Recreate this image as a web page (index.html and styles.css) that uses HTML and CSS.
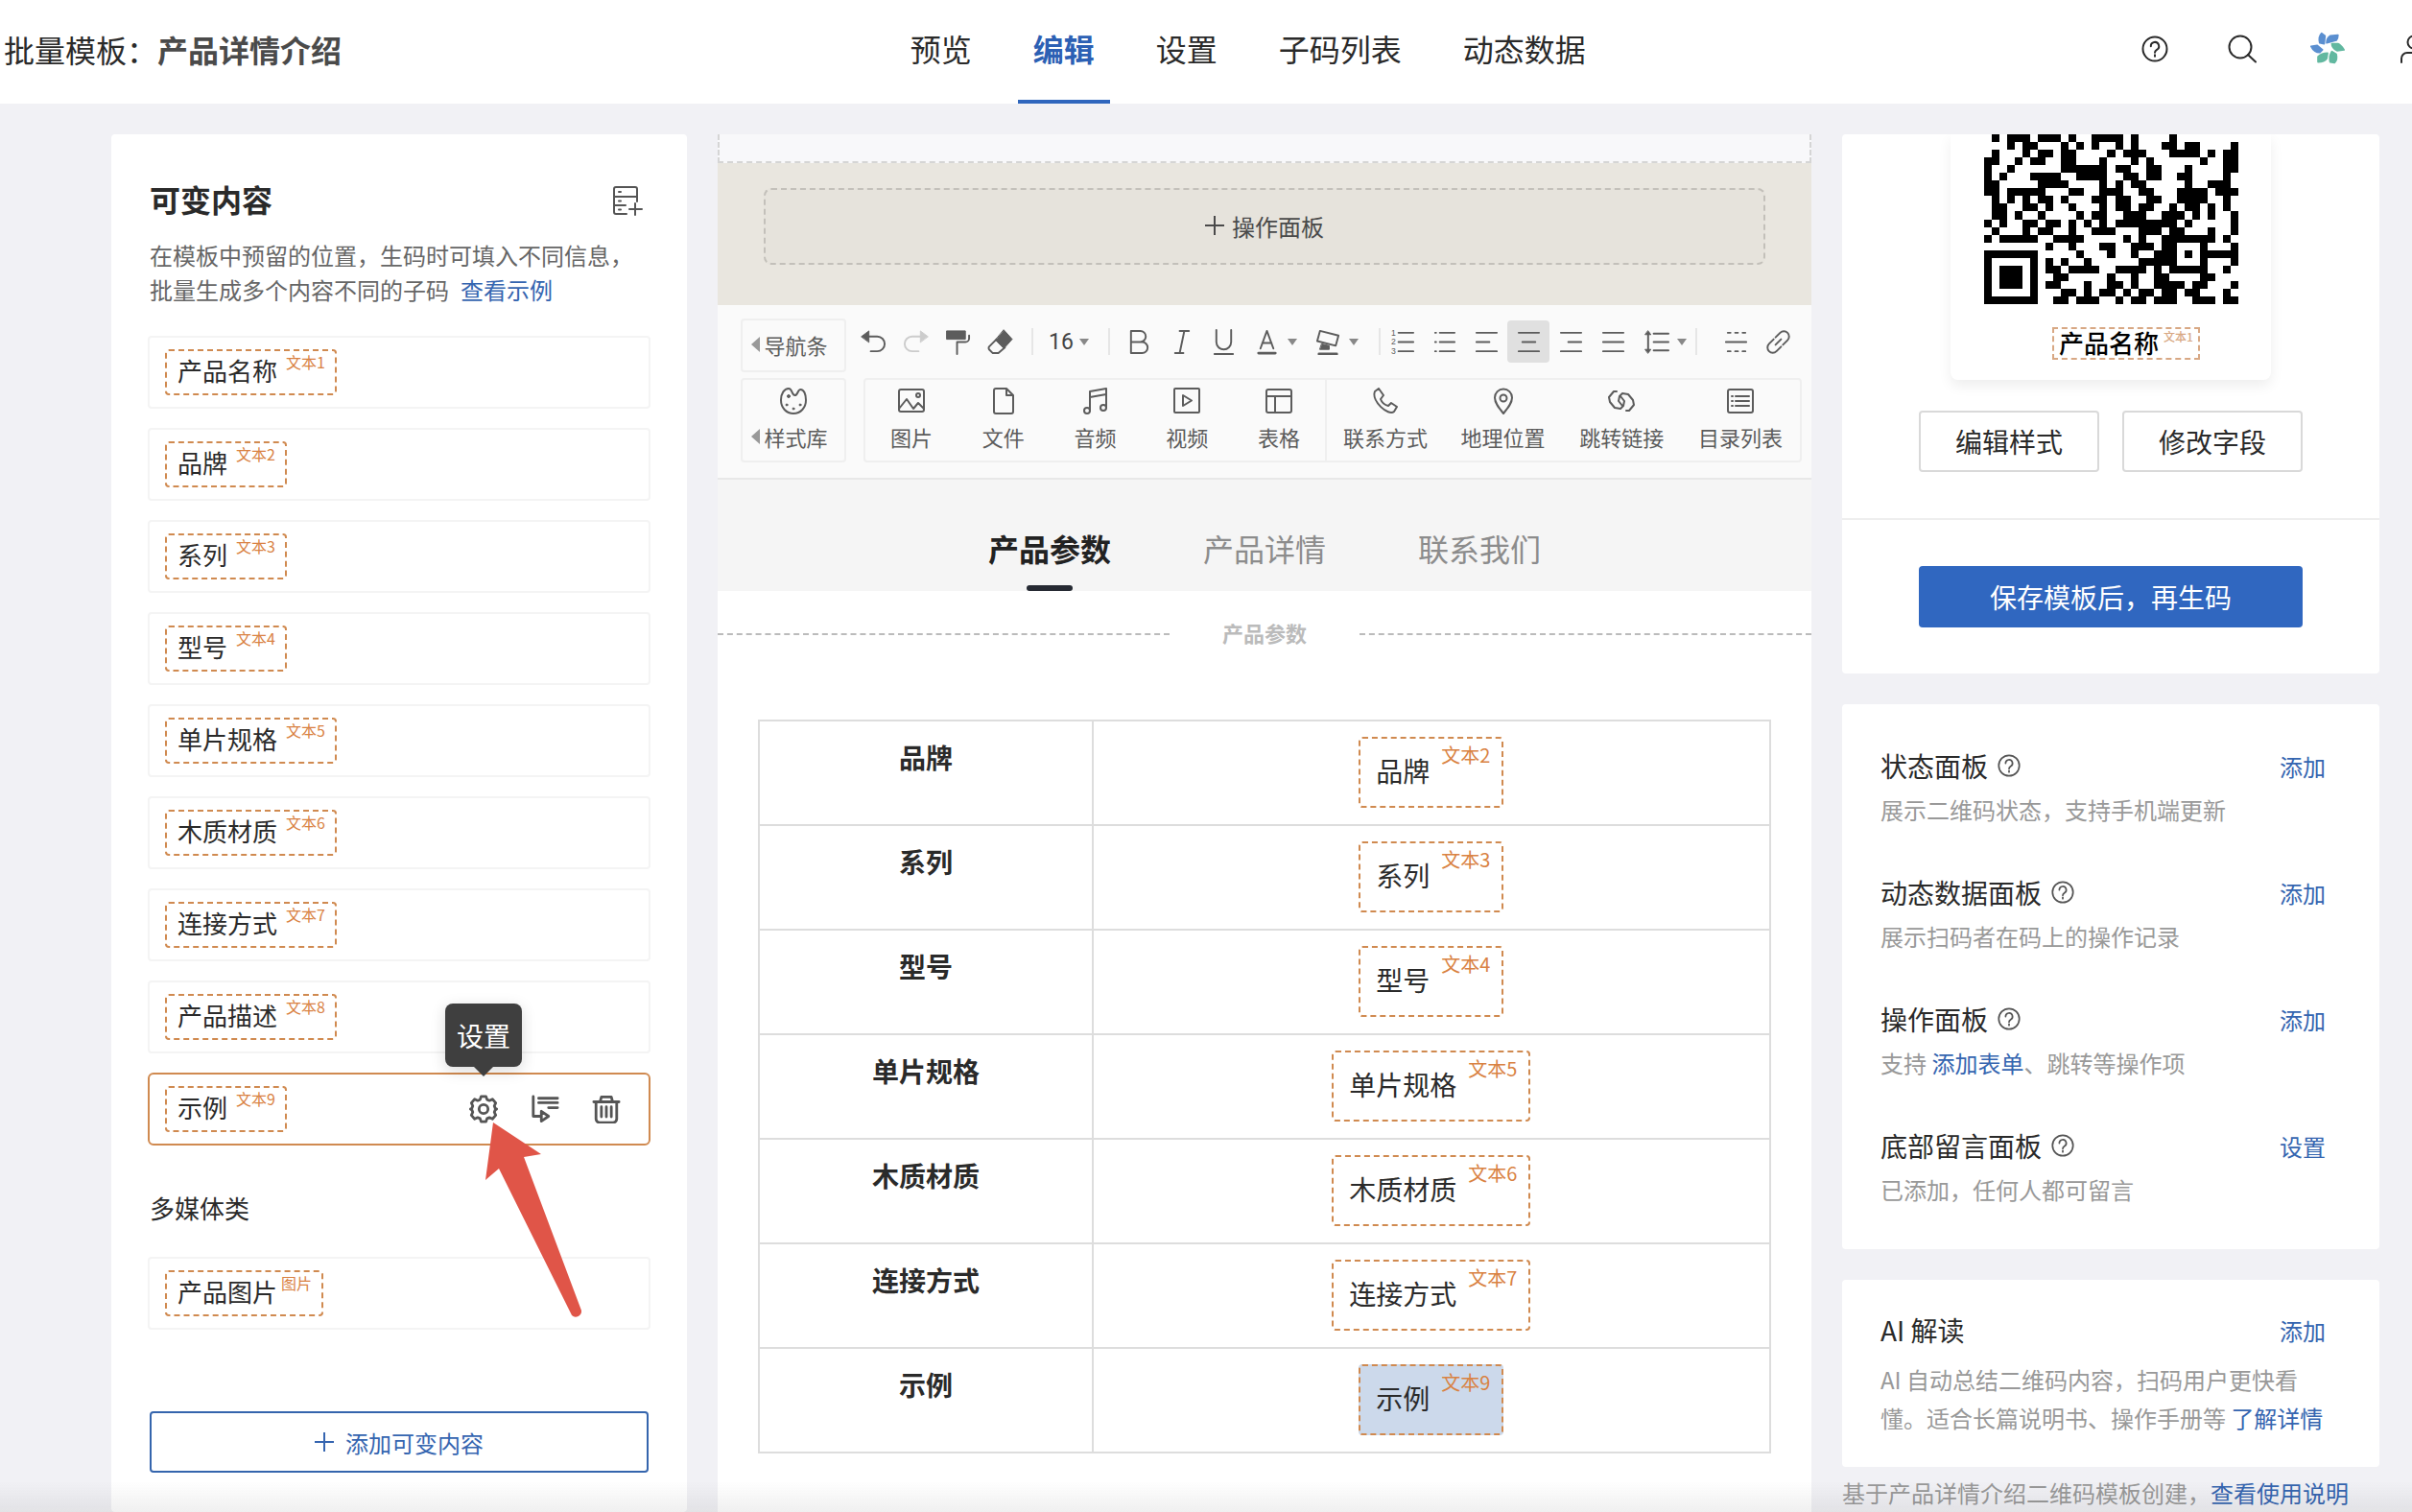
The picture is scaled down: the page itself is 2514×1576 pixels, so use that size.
FILE: index.html
```html
<!DOCTYPE html>
<html lang="zh-CN">

<head>
  <meta charset="UTF-8">
  <meta name="viewport" content="width=device-width, initial-scale=1.0">

  <title>批量模板：产品详情介绍</title>
  <link rel="stylesheet" href="styles.css">
</head>

<body>
  <!-- Shared icons -->
  <svg class="sprite" aria-hidden="true">
    <symbol id="icon-help" viewBox="0 0 28 28">
      <circle cx="14" cy="14" r="12.5" />
      <path d="M9.8 11.2a4.2 4.2 0 1 1 6.2 3.6c-1.4.9-2 1.500-2 3" />
      <path d="M14 20.200v1.600" />
    </symbol>
    <symbol id="icon-caret" viewBox="0 0 10 7">
      <path d="M0 0h10L5 7z" />
    </symbol>
    <symbol id="icon-plus" viewBox="0 0 20 20">
      <path d="M10 0v20M0 10h20" />
    </symbol>
    <symbol id="icon-left" viewBox="0 0 9 16">
      <path d="M9 0v16L0 8z" />
    </symbol>
  </svg>

  <header class="header">
    <h1 class="title">批量模板<span class="colon">：</span><b>产品详情介绍</b></h1>
    <nav class="nav">
      <a href="#">预览</a>
      <a href="#" class="active">编辑</a>
      <a href="#">设置</a>
      <a href="#">子码列表</a>
      <a href="#">动态数据</a>
    </nav>
    <div class="header-tools">
      <button type="button" aria-label="帮助"><svg class="line" viewBox="-2 -2 32 32"><use href="#icon-help" width="28" height="28" /></svg></button>
      <button type="button" aria-label="搜索">
        <svg class="line" viewBox="0 0 32 32"><circle cx="15" cy="14" r="11.500" /><path d="M23 22l8 7.500" /></svg>
      </button>
      <button type="button" aria-label="应用">
        <svg class="logo" viewBox="0 0 40 40">
          <g fill="#5b8fd0" stroke="#5b8fd0">
            <path d="M13 2l4 3-1 9-5-1c-1-4-1-8 2-11z" />
            <path d="M23 5l9-1c0 3-1 5-2 6l-11 3c0-3 1-6 4-8z" />
            <path d="M1 17l7-1 6 5-3 3c-5 0-8-3-10-7z" />
          </g>
          <g fill="#62b8a0" stroke="#62b8a0">
            <path d="M25 14h7c3 1 5 4 7 7l-8 1c-4-2-6-4-6-8z" />
            <path d="M25 23l5 3c1 4 0 8-2 10l-5-1c-1-5 0-9 2-12z" />
            <path d="M20 25l-1 6c-2 3-6 4-10 4v-6c3-3 7-4 11-4z" />
          </g>
        </svg>
      </button>
      <button type="button" aria-label="用户">
        <svg class="line" viewBox="0 0 32 32"><circle cx="16" cy="9" r="6.500" /><path d="M3 30v-4a6 6 0 0 1 6-6h14a6 6 0 0 1 6 6v4" /></svg>
      </button>
    </div>
  </header>

  <main class="main">
    <!-- Variable content -->
    <section class="panel variables">
      <div class="variables-head">
        <h2>可变内容</h2>
        <button type="button" class="icon-button" aria-label="批量添加">
          <svg class="line" viewBox="0 0 32 32"><path d="M26 17V4a2 2 0 0 0-2-2H4a2 2 0 0 0-2 2v24a2 2 0 0 0 2 2h11M2 12h24M2 21h12M7 7h2M7 16.500h2M7 25.500h2M24 19v12M18 25h13" /></svg>
        </button>
      </div>
      <p class="hint">在模板中预留的位置，生码时可填入不同信息，<br>批量生成多个内容不同的子码&ensp;<a href="#">查看示例</a></p>

      <ul class="items">
        <li class="item"><span class="chip">产品名称<sup>文本1</sup></span></li>
        <li class="item"><span class="chip">品牌<sup>文本2</sup></span></li>
        <li class="item"><span class="chip">系列<sup>文本3</sup></span></li>
        <li class="item"><span class="chip">型号<sup>文本4</sup></span></li>
        <li class="item"><span class="chip">单片规格<sup>文本5</sup></span></li>
        <li class="item"><span class="chip">木质材质<sup>文本6</sup></span></li>
        <li class="item"><span class="chip">连接方式<sup>文本7</sup></span></li>
        <li class="item"><span class="chip">产品描述<sup>文本8</sup></span></li>
        <li class="item selected">
          <span class="chip">示例<sup>文本9</sup></span>
          <div class="item-actions">
            <button type="button" class="icon-button" aria-label="设置">
              <svg class="line" viewBox="0 0 32 32">
                <path d="M13.300 2h5.400l1.200 3.500 2.600 1.100 3.400-1.600 3.600 4.200-1.500 3.300 .9 2.500 1.600 1-1.600 1-.9 2.500 1.500 3.300-3.600 4.200-3.400-1.600-2.600 1.100L18.700 30h-5.400l-1.200-3.500-2.600-1.100L6.100 27l-3.600-4.200L4 19.500 3.100 17l-1.600-1 1.600-1L4 12.500 2.500 9.200 6.100 5l3.400 1.600 2.600-1.100z" />
                <circle cx="16" cy="16" r="5" />
              </svg>
              <span class="tooltip">设置</span>
            </button>
            <button type="button" class="icon-button" aria-label="插入">
              <svg class="line" viewBox="0 0 32 32"><path d="M3 2v22h9M9 4h21M9 9h21M20 14.500h10M12 18.500v11l8-5.500z" /></svg>
            </button>
            <button type="button" class="icon-button" aria-label="删除">
              <svg class="line" viewBox="0 0 32 32"><path d="M2 8h28M9 8l1.500-5.500h11L23 8M4.500 8v19a4 4 0 0 0 4 4h15a4 4 0 0 0 4-4V8M10.500 13.500v11M16 13.500v11M21.500 13.500v11" /></svg>
            </button>
          </div>
          <svg class="pointer" viewBox="0 0 102 204" aria-hidden="true"><path d="M8 0l50 33-18 3 60 160a6 6 0 0 1-10 5L14 48 0 60z" /></svg>
        </li>
      </ul>

      <h3>多媒体类</h3>
      <ul class="items">
        <li class="item"><span class="chip media">产品图片<sup>图片</sup></span></li>
      </ul>

      <button type="button" class="add-button"><svg class="line" viewBox="0 0 20 20"><use href="#icon-plus" /></svg>添加可变内容</button>
    </section>

    <!-- Editor -->
    <section class="editor">
      <div class="page-top"></div>
      <div class="banner">
        <button type="button"><svg class="line" viewBox="0 0 20 20"><use href="#icon-plus" /></svg>操作面板</button>
      </div>

      <div class="toolbar">
        <button type="button" class="side-button"><span><svg class="arrow"><use href="#icon-left" /></svg>导航条</span></button>
        <div class="tools">
          <div class="tool-group">
            <button type="button" aria-label="撤销"><svg class="line" viewBox="0 0 28 28"><path d="M6 8h12a8 8 0 0 1 0 16h-7" /><path class="solid" d="M1 8l8-6v12z" /></svg></button>
            <button type="button" aria-label="重做" disabled><svg class="line" viewBox="0 0 28 28"><path d="M22 8H10a8 8 0 0 0 0 16h7" /><path class="solid" d="M27 8l-8-6v12z" /></svg></button>
            <button type="button" aria-label="格式刷"><svg class="line" viewBox="0 0 28 28"><path class="solid" d="M2 2h20v9H2z" /><path d="M26 7v3a4 4 0 0 1-4 4h-9v13" /></svg></button>
            <button type="button" aria-label="清除格式"><svg class="line" viewBox="0 0 28 28"><path d="M10 11l-8 8a3 3 0 0 0 0 3l4 4h6l7-6" /><path class="solid" d="M18 1l9 10-9 10-9-9z" /></svg></button>
          </div>
          <div class="tool-group size">
            <select aria-label="字号"><option>16</option></select>
            <svg class="caret"><use href="#icon-caret" /></svg>
          </div>
          <div class="tool-group text">
            <button type="button" aria-label="加粗"><svg class="line" viewBox="0 0 28 28"><path d="M5 2h10a6 6 0 0 1 0 12H5zM5 14h12a6 6 0 0 1 0 12H5z" /></svg></button>
            <button type="button" aria-label="斜体"><svg class="line" viewBox="0 0 28 28"><path d="M12 2h10M7 26h9M17 2l-5 24" /></svg></button>
            <button type="button" aria-label="下划线"><svg class="line" viewBox="0 0 28 28"><path d="M6 1v13a8 8 0 0 0 16 0V1M4 27h20" /></svg></button>
            <button type="button" class="wide" aria-label="文字颜色"><svg class="line" viewBox="0 0 28 28"><path d="M7 21l7-19 7 19M9 15h10" /><path class="bar" d="M5 26h18" /></svg><svg class="caret"><use href="#icon-caret" /></svg></button>
            <button type="button" class="wide" aria-label="背景颜色"><svg class="line" viewBox="0 0 28 28"><path d="M5 2l20 5-3 11-20-5z" /><path class="solid" d="M7 16l8 2v4H5z" /><path class="bar" d="M4 27h19" /></svg><svg class="caret"><use href="#icon-caret" /></svg></button>
          </div>
          <div class="tool-group">
            <button type="button" aria-label="有序列表"><svg class="line" viewBox="0 0 28 28"><path d="M10 4h16M10 14h16M10 24h16" /><text x="2" y="7">1</text><text x="2" y="17">2</text><text x="2" y="27">3</text></svg></button>
            <button type="button" aria-label="无序列表"><svg class="line" viewBox="0 0 28 28"><path d="M9 4h16M9 14h16M9 24h16M4 4h1M4 14h1M4 24h1" /></svg></button>
            <button type="button" aria-label="左对齐"><svg class="line" viewBox="0 0 28 28"><path d="M3 4h22M3 14h14M3 24h22" /></svg></button>
            <button type="button" class="on" aria-label="居中"><svg class="line" viewBox="0 0 28 28"><path d="M3 4h22M7 14h14M3 24h22" /></svg></button>
            <button type="button" aria-label="右对齐"><svg class="line" viewBox="0 0 28 28"><path d="M3 4h22M11 14h14M3 24h22" /></svg></button>
            <button type="button" aria-label="两端对齐"><svg class="line" viewBox="0 0 28 28"><path d="M3 4h22M3 14h22M3 24h22" /></svg></button>
            <button type="button" class="wide" aria-label="行高"><svg class="line" viewBox="0 0 28 28"><path d="M5 4v20M11 5h16M11 14h16M11 23h16" /><path class="solid" d="M5 2l3 4H2zM5 26l3-4H2z" /></svg><svg class="caret"><use href="#icon-caret" /></svg></button>
          </div>
          <div class="tool-group last">
            <button type="button" aria-label="分割线"><svg class="line" viewBox="0 0 28 28"><path d="M3 14h22M5 4h3M13 4h3M21 4h3M5 24h3M13 24h3M21 24h3" /></svg></button>
            <button type="button" aria-label="链接"><svg class="line" viewBox="0 0 28 28"><path d="M11 9l5-5a5 5 0 0 1 8 8l-5 5M17 19l-5 5a5 5 0 0 1-8-8l5-5M11 17l6-6" /></svg></button>
          </div>
        </div>

        <button type="button" class="side-button">
          <svg class="line" viewBox="0 0 28 28"><path d="M9 1c4 0 3 7 6.500 7s2.500-6 6-6S27 7 27 13c0 8-5.500 14-13 14S1 21 1 13C1 6 4.500 1 9 1z" /><g class="solid"><circle cx="9" cy="9" r="1.500" /><circle cx="7" cy="18" r="1" /><circle cx="14" cy="22" r="1" /><circle cx="21" cy="18" r="1" /></g></svg>
          <span><svg class="arrow"><use href="#icon-left" /></svg>样式库</span>
        </button>
        <div class="inserts">
          <button type="button"><svg class="line" viewBox="0 0 28 28"><rect x="1" y="2" width="26" height="23" rx="2" /><path d="M1 22l8-10 7 10 5-6 6 6" /><circle cx="21" cy="8" r="2" /></svg>图片</button>
          <button type="button"><svg class="line" viewBox="0 0 28 28"><path d="M17 1H6a2 2 0 0 0-2 2v22a2 2 0 0 0 2 2h16a2 2 0 0 0 2-2V8zM17 1v7h7" /></svg>文件</button>
          <button type="button"><svg class="line" viewBox="0 0 28 28"><circle cx="5" cy="24" r="3" /><circle cx="22" cy="21" r="3" /><path d="M8 24V4l17-3v20M8 10l17-3" /></svg>音频</button>
          <button type="button"><svg class="line" viewBox="0 0 28 28"><rect x="1" y="1" width="26" height="25" rx="1" /><path d="M10 8v11l9-5.500z" /></svg>视频</button>
          <button type="button"><svg class="line" viewBox="0 0 28 28"><rect x="1" y="2" width="26" height="24" rx="2" /><path d="M1 9h26M10 9v17" /></svg>表格</button>
          <button type="button" class="split"><svg class="line" viewBox="0 0 28 28"><path d="M3 4l4-3 5 7-3 4c1 3 4 6 8 7l3-3 6 4-3 5C17 30-1 14 3 4z" /></svg>联系方式</button>
          <button type="button"><svg class="line" viewBox="0 0 28 28"><path d="M14 27C9 21 5 16 5 10.500a9 9 0 0 1 18 0C23 16 19 21 14 27z" /><circle cx="14" cy="11" r="3.500" /></svg>地理位置</button>
          <button type="button"><svg class="line" viewBox="0 0 28 28"><path d="M9 4H6L1 10l1 5 5 6 6 1 3-3 1-5-4-5M19 24h3l5-6-1-5-5-6-6-1-3 3-1 5 4 5" /></svg>跳转链接</button>
          <button type="button"><svg class="line" viewBox="0 0 28 28"><rect x="1" y="2" width="26" height="24" rx="2" /><path d="M9 9h14M9 14h14M9 19h14M5 9h1M5 14h1M5 19h1" /></svg>目录列表</button>
        </div>
      </div>

      <nav class="tabs">
        <a href="#" class="active">产品参数</a>
        <a href="#">产品详情</a>
        <a href="#">联系我们</a>
      </nav>

      <div class="content">
        <div class="section-title"><span>产品参数</span></div>
        <table class="params">
          <tr><th scope="row">品牌</th><td><span class="chip large">品牌<sup>文本2</sup></span></td></tr>
          <tr><th scope="row">系列</th><td><span class="chip large">系列<sup>文本3</sup></span></td></tr>
          <tr><th scope="row">型号</th><td><span class="chip large">型号<sup>文本4</sup></span></td></tr>
          <tr><th scope="row">单片规格</th><td><span class="chip large">单片规格<sup>文本5</sup></span></td></tr>
          <tr><th scope="row">木质材质</th><td><span class="chip large">木质材质<sup>文本6</sup></span></td></tr>
          <tr><th scope="row">连接方式</th><td><span class="chip large">连接方式<sup>文本7</sup></span></td></tr>
          <tr><th scope="row">示例</th><td><span class="chip large picked">示例<sup>文本9</sup></span></td></tr>
        </table>
      </div>
    </section>

    <!-- Code preview and panels -->
    <aside class="side">
      <section class="panel code-card">
        <div class="code">
          <svg id="qr" viewBox="0 0 33 22" role="img" aria-label="二维码"></svg>
          <span class="code-label">产品名称<sup>文本1</sup></span>
        </div>
        <div class="code-buttons">
          <button type="button">编辑样式</button>
          <button type="button">修改字段</button>
        </div>
        <div class="save">
          <button type="button">保存模板后，再生码</button>
        </div>
      </section>

      <section class="panel options">
        <div class="option">
          <h3>状态面板<svg class="line help"><use href="#icon-help" /></svg></h3><a href="#">添加</a>
          <p>展示二维码状态，支持手机端更新</p>
        </div>
        <div class="option">
          <h3>动态数据面板<svg class="line help"><use href="#icon-help" /></svg></h3><a href="#">添加</a>
          <p>展示扫码者在码上的操作记录</p>
        </div>
        <div class="option">
          <h3>操作面板<svg class="line help"><use href="#icon-help" /></svg></h3><a href="#">添加</a>
          <p>支持 <a href="#">添加表单</a>、跳转等操作项</p>
        </div>
        <div class="option">
          <h3>底部留言面板<svg class="line help"><use href="#icon-help" /></svg></h3><a href="#">设置</a>
          <p>已添加，任何人都可留言</p>
        </div>
      </section>

      <section class="panel options ai">
        <div class="option">
          <h3>AI 解读</h3><a href="#">添加</a>
          <p>AI 自动总结二维码内容，扫码用户更快看懂。适合长篇说明书、操作手册等 <a href="#">了解详情</a></p>
        </div>
      </section>

      <p class="source">基于产品详情介绍二维码模板创建，<a href="#">查看使用说明</a></p>
    </aside>
  </main>

  <script src="script.js"></script>
</body>
</html>
```

FILE: styles.css
```css
/* Template editor */

* {
  box-sizing: border-box;
}

body {
  margin: 0;
  height: 100vh;
  overflow: hidden;
  display: flex;
  flex-direction: column;
  background-color: #f1f1f5;
  color: #2a2a2a;
  font-family: "Noto Sans CJK SC", "Noto Sans", sans-serif;
  font-size: 24px;
}

body::after {
  content: "";
  position: fixed;
  left: 0;
  right: 0;
  bottom: 0;
  height: 32px;
  background: linear-gradient(rgba(60, 60, 60, 0), rgba(60, 60, 60, 0.08));
  pointer-events: none;
}

h1, h2, h3, p, ul {
  margin: 0;
  padding: 0;
  font-weight: normal;
}

ul {
  list-style: none;
}

a {
  color: #3565b0;
  text-decoration: none;
}

button {
  padding: 0;
  border: none;
  background: none;
  color: inherit;
  font: inherit;
  cursor: pointer;
}

sup {
  vertical-align: baseline;
  color: #d98243;
}

.sprite {
  position: absolute;
  width: 0;
  height: 0;
}

.line {
  fill: none;
  stroke: currentColor;
  stroke-width: 2;
  stroke-linecap: round;
  stroke-linejoin: round;
}

.line .solid {
  fill: currentColor;
  stroke-width: 1;
}

/* Header */

.header {
  flex: none;
  display: grid;
  grid-template-columns: 37% auto 1fr;
  align-items: center;
  height: 108px;
  padding-left: 4px;
  background-color: #fff;
}

.title {
  padding-bottom: 6px;
  font-size: 32px;
  white-space: nowrap;
}

.title b {
  color: #4a4a4a;
}

.colon {
  font-family: "Noto Sans CJK TC", sans-serif;
}

.nav {
  display: flex;
  gap: 32px;
  height: 108px;
}

.nav a {
  padding: 0 16px;
  border-bottom: 4px solid transparent;
  color: #2a2a2a;
  font-size: 32px;
  line-height: 100px;
}

.nav .active {
  border-color: #2f66bd;
  color: #2c60b4;
  font-weight: bold;
}

.header-tools {
  display: flex;
  justify-content: flex-end;
  gap: 54px;
  margin-right: -20px;
  padding-bottom: 6px;
}

.header-tools svg {
  display: block;
  width: 36px;
  height: 36px;
  padding: 2px;
}

.header-tools .logo {
  padding: 0;
  stroke-width: 2;
  stroke-linejoin: round;
}

/* Columns */

.main {
  flex: 1;
  min-height: 0;
  display: grid;
  grid-template-columns: 600px 1fr 560px;
  gap: 32px;
  padding: 32px 34px 0 116px;
}

.panel {
  border-radius: 4px;
  background-color: #fff;
}

/* Variable content */

.variables {
  padding: 44px 38px 0;
}

.variables-head {
  display: flex;
  justify-content: space-between;
  align-items: center;
  height: 50px;
  padding: 0 8px 0 2px;
}

.variables h2 {
  padding-bottom: 4px;
  font-size: 32px;
  font-weight: bold;
}

.icon-button {
  position: relative;
  width: 32px;
  height: 32px;
  color: #555;
}

.icon-button svg {
  display: block;
  width: 32px;
  height: 32px;
}

.hint {
  margin: 14px 0 30px;
  padding-left: 2px;
  color: #666;
  line-height: 36px;
  white-space: nowrap;
}

.items {
  display: grid;
  gap: 20px;
}

.item {
  position: relative;
  display: flex;
  justify-content: space-between;
  align-items: center;
  height: 76px;
  padding: 0 28px 0 16px;
  border: 2px solid #f4f4f4;
  border-radius: 4px;
}

.item.selected {
  border-color: #d08a50;
  border-radius: 6px;
}

.chip {
  display: inline-flex;
  align-items: flex-start;
  gap: 9px;
  padding: 0 10px 4px 11px;
  border: 2px dashed #d08a50;
  border-radius: 4px;
  font-size: 26px;
  line-height: 40px;
}

.chip sup {
  font-size: 16px;
  line-height: 22px;
}

.chip.media {
  gap: 4px;
}

.item-actions {
  display: flex;
  gap: 32px;
}

.item-actions svg {
  padding: 1px;
  stroke-width: 3;
}

.tooltip {
  position: absolute;
  bottom: 60px;
  left: -24px;
  width: 80px;
  border-radius: 8px;
  background-color: #3f3f3f;
  color: #fff;
  font-size: 28px;
  line-height: 66px;
  box-shadow: 0 4px 16px rgba(0, 0, 0, 0.15);
}

.tooltip::after {
  content: "";
  position: absolute;
  top: 100%;
  left: 30px;
  border: 10px solid transparent;
  border-top-color: #3f3f3f;
  border-bottom: none;
}

.pointer {
  position: absolute;
  top: 50px;
  right: 68px;
  width: 102px;
  fill: #e05548;
  z-index: 1;
}

.variables h3 {
  padding: 44px 2px 30px;
  font-size: 26px;
  line-height: 42px;
}

.add-button {
  display: flex;
  justify-content: center;
  align-items: center;
  gap: 12px;
  width: 520px;
  height: 64px;
  margin: 85px 2px 0;
  border: 2px solid #3565ad;
  border-radius: 4px;
  color: #3565b0;
}

.add-button svg,
.banner svg {
  width: 20px;
  height: 20px;
}

/* Editor */

.editor {
  display: flex;
  flex-direction: column;
  background-color: #fff;
}

.page-top {
  height: 30px;
  border: 2px dashed #d5d5d5;
  border-top: none;
  background-color: #f8f8fa;
}

.banner {
  padding: 26px 48px 42px;
  background-color: #e9e6df;
}

.banner button {
  display: flex;
  justify-content: center;
  align-items: center;
  gap: 8px;
  width: 100%;
  height: 80px;
  padding-bottom: 2px;
  border: 2px dashed #c3c0ba;
  border-radius: 8px;
  background-color: #e6e3dc;
  color: #4a4a4a;
}

.toolbar {
  display: grid;
  grid-template-columns: 110px 1fr;
  gap: 6px 18px;
  padding: 14px 10px 16px 24px;
  border-bottom: 2px solid #e8e8e8;
  background-color: #fafafa;
  color: #5c5c5c;
  font-size: 22px;
}

.side-button {
  display: flex;
  flex-direction: column;
  justify-content: center;
  align-items: center;
  gap: 8px;
  min-height: 56px;
  padding-right: 8px;
  padding-bottom: 2px;
  border: 2px solid #efefef;
  border-radius: 4px;
  line-height: 30px;
}

.side-button span {
  display: flex;
  align-items: center;
  gap: 4px;
}

.side-button .line,
.inserts svg {
  width: 28px;
  height: 28px;
}

.side-button .line {
  margin-left: 8px;
}

.arrow {
  width: 9px;
  height: 16px;
  fill: #999;
}

.tools {
  display: flex;
  align-items: center;
  margin-left: -12px;
  padding-bottom: 8px;
}

.tool-group {
  display: flex;
  align-items: center;
  height: 28px;
}

.tool-group + .tool-group {
  border-left: 2px solid #e6e6e6;
}

.tool-group button {
  display: flex;
  justify-content: center;
  align-items: center;
  gap: 8px;
  width: 44px;
  height: 44px;
  border-radius: 4px;
}

.tool-group .wide {
  width: 64px;
}

.tool-group .on {
  background-color: #e0e0e0;
}

.tool-group button:disabled {
  color: #ccc;
}

.tool-group .line {
  width: 27px;
  height: 27px;
}

.tool-group text {
  fill: currentColor;
  stroke: none;
  font-size: 9px;
  font-family: "Liberation Sans", sans-serif;
}

.tool-group .bar {
  stroke-width: 3;
}

.tool-group .caret {
  width: 10px;
  height: 7px;
  fill: #888;
}

.tool-group.size {
  gap: 4px;
  width: 80px;
  margin-left: 11px;
  padding-left: 16px;
}

.size select {
  width: 28px;
  padding: 0;
  border: none;
  appearance: none;
  background: none;
  color: #444;
  font-family: Roboto, sans-serif;
  font-size: 23px;
}

.tool-group.text {
  width: 282px;
  padding-left: 8px;
}

.tool-group.last {
  padding-left: 18px;
}

.inserts {
  display: grid;
  grid-template-columns: repeat(5, 96fr) repeat(4, 124fr);
  height: 88px;
  border: 2px solid #efefef;
  border-radius: 4px;
}

.inserts button {
  display: flex;
  flex-direction: column;
  justify-content: center;
  align-items: center;
  gap: 8px;
  padding-bottom: 2px;
  line-height: 30px;
}

.inserts .split {
  border-left: 2px solid #efefef;
}

.tabs {
  display: flex;
  justify-content: center;
  gap: 96px;
  padding-top: 32px;
  background-color: #f5f5f5;
}

.tabs a {
  display: flex;
  flex-direction: column;
  align-items: center;
  height: 84px;
  color: #8c8c8c;
  font-size: 32px;
  line-height: 78px;
}

.tabs .active {
  color: #222;
  font-weight: bold;
}

.tabs .active::after {
  content: "";
  width: 48px;
  height: 6px;
  border-radius: 3px;
  background-color: #262a33;
}

.content {
  padding-top: 26px;
}

.section-title {
  display: flex;
  align-items: center;
  gap: 55px;
  color: #bbb;
  font-size: 22px;
  font-weight: bold;
  line-height: 34px;
}

.section-title span {
  padding-bottom: 4px;
}

.section-title::before,
.section-title::after {
  content: "";
  flex: 1;
  border-top: 2px dashed #bbb;
}

.params {
  width: calc(100% - 84px);
  margin: 70px 42px 0;
  border-collapse: collapse;
  font-size: 28px;
}

.params th,
.params td {
  height: 109px;
  padding: 0 0 2px;
  border: 2px solid #ddd;
  text-align: center;
}

.params th {
  width: 33%;
  padding-top: 17px;
  vertical-align: top;
  line-height: 40px;
}

.chip.large {
  gap: 12px;
  padding: 0 12px 4px 16px;
  font-size: 28px;
  line-height: 66px;
  vertical-align: middle;
}

.chip.large sup {
  font-size: 20px;
  line-height: 34px;
}

.chip.picked {
  background-color: #ccd9eb;
}

/* Right column */

.code {
  display: flex;
  flex-direction: column;
  align-items: center;
  width: 334px;
  height: 256px;
  margin: 0 auto;
  border-radius: 0 0 8px 8px;
  box-shadow: 0 6px 14px rgba(0, 0, 0, 0.07);
  clip-path: inset(0 -24px -24px);
}

#qr {
  width: 265px;
  height: 177px;
  shape-rendering: crispEdges;
}

.code-label {
  display: flex;
  gap: 5px;
  margin: 24px 0 0 32px;
  padding: 0 5px 2px;
  border: 2px dashed #d8a884;
  color: #000;
  font-size: 26px;
  font-weight: 500;
  line-height: 28px;
}

.code-label sup {
  color: #d8a884;
  font-size: 12px;
  line-height: 16px;
}

.code-buttons {
  display: flex;
  justify-content: space-between;
  padding: 32px 80px 48px;
  border-bottom: 2px solid #eee;
}

.code-buttons button {
  width: 188px;
  height: 64px;
  border: 2px solid #d9d9d9;
  border-radius: 4px;
  font-size: 28px;
}

.save {
  padding: 48px 80px;
}

.save button {
  width: 100%;
  height: 64px;
  border-radius: 4px;
  background-color: #3067c0;
  color: #fff;
  font-size: 28px;
}

.options {
  display: grid;
  gap: 44px;
  margin-top: 32px;
  padding: 42px 56px 42px 40px;
}

.option {
  display: grid;
  grid-template-columns: 1fr auto;
  align-items: center;
  row-gap: 4px;
}

.option h3 {
  display: flex;
  align-items: center;
  gap: 10px;
  font-size: 28px;
  line-height: 44px;
}

.option p {
  grid-column: 1 / -1;
  color: #999;
  line-height: 40px;
}

.help {
  width: 24px;
  height: 24px;
  color: #555;
}

.options.ai {
  padding: 30px 56px 31px 40px;
}

.ai .option {
  row-gap: 10px;
}

.source {
  padding-top: 7px;
  color: #999;
  line-height: 40px;
  white-space: nowrap;
}
```

FILE: script.js
```js
// Modules of the code, one string per row
const rows = [
  '.#.###.###.#..####.#....#........',
  '...#.##...#.#.#..#.#...##.##....#',
  '.#...#.##.##....#.###...####.#.##',
  '##..#.##..##...#...#.#......#..##',
  '#..#......######.##..##...#....##',
  '#.#...####..####..##.##..##....#.',
  '##.....####....#.#.##.....#..###.',
  '##.#####...##..###..##...####.###',
  '.#.#.#.##.#...##.##..##..####..#.',
  '.##..##.#..#...#.##.##..#.##.#.#.',
  '.##.#..#....#.##..###..###.#.#..#',
  '#.#..##.##.#.#.#.########.#.....#',
  '.#...#.##..#..###...###.##...#..#',
  '#.#####..####.....#.#..#######.#.',
  '........#..#...##..###.##...#...#',
  '#######.....#...#..#..###.#.#####',
  '#.....#.#.#..#......#####...#...#',
  '#.###.#.##.####..####.#.#####..#.',
  '#.###.#..##.....#..#..##....##...',
  '#.###.#.##...#..##.#..####.##...#',
  '#.....#...##.#.##.#.##.##.##...#.',
  '#######..##.###..#.##.###..###.##'
];

let path = '';
rows.forEach((row, y) => {
  for (let x = 0; x < row.length; x++) {
    if (row[x] === '#') {
      path += `M${x} ${y}h1v1h-1z`;
    }
  }
});

document.getElementById('qr').innerHTML = `<path d="${path}"/>`;
```
